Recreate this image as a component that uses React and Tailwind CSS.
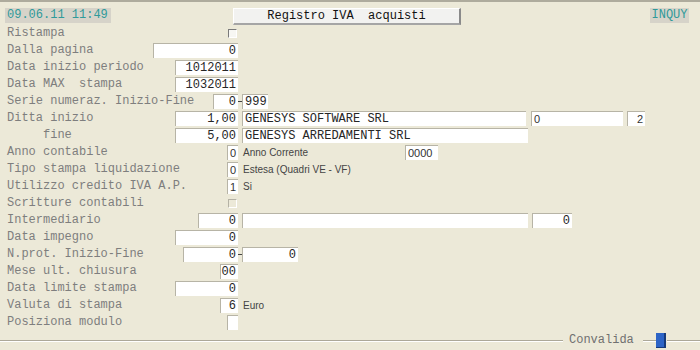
import React from "react";

const MONO = "font-['Liberation_Mono','Courier_New',monospace]";
const SANS = "font-['Liberation_Sans',Arial,sans-serif]";

function Box({ w, align = "right", sans = false, children, className = "" }) {
  return (
    <div
      className={`h-[15px] shrink-0 bg-white border-t border-l border-[#b7b4a6] flex items-center overflow-hidden whitespace-pre ${
        align === "right" ? "justify-end pr-[2px]" : "justify-start pl-[2px]"
      } ${sans ? `${SANS} text-[11px] text-[#333]` : `${MONO} text-[12px] text-[#262626]`} leading-[14px] ${w} ${className}`}
    >
      {children}
    </div>
  );
}

function Check({ disabled = false }) {
  return (
    <div
      className={`w-[9px] h-[9px] mr-[1px] shrink-0 border-t border-l ${
        disabled ? "border-[#b5b2a5] bg-[#ece9d8]" : "border-[#7a7a7a] bg-[#f7f7f3]"
      } border-r border-b border-r-white border-b-white`}
    />
  );
}

function Row({ label, right, children, indent = false }) {
  return (
    <div className="flex h-[17px] items-center">
      <div className="w-[238px] shrink-0 flex items-center justify-between pl-[7px]">
        <span className={`whitespace-pre text-[12px] leading-[17px] text-[#7e7e7e] ${MONO}`}>
          {indent ? "     " : ""}
          {label}
        </span>
        {right}
      </div>
      {children}
    </div>
  );
}

function Dash() {
  return (
    <div className="w-[4px] h-[15px] flex items-center shrink-0">
      <div className="w-[4px] h-px bg-[#444]" />
    </div>
  );
}

function Note({ children, className = "" }) {
  return (
    <span className={`${SANS} text-[10px] leading-[15px] text-[#444] whitespace-pre ${className}`}>
      {children}
    </span>
  );
}

export default function App() {
  return (
    <div className={`w-[700px] h-[350px] bg-[#ece9d8] overflow-hidden ${MONO}`}>
      <div className="border-t-2 border-[#aeab9d]" />
      {/* header */}
      <div className="h-[23px] flex items-start pt-[6px] pl-[5px]">
        <div className="w-[106px] h-[15px] bg-[#d6d3c9] text-[#2f9a9a] text-[12px] leading-[15px] pl-[2px]">
          09.06.11 11:49
        </div>
        <div className="ml-[122px] w-[228px] h-[17px] bg-[#f2f2f0] border-t border-l border-white border-r-2 border-b-2 border-r-[#8a8a8a] border-b-[#a5a5a5] text-[12px] leading-[14px] text-[#111] text-center whitespace-pre">
          Registro IVA  acquisti
        </div>
        <div className="ml-auto mr-[11px] w-[39px] h-[15px] bg-[#d6d3c9] text-[#2f9a9a] text-[12px] leading-[15px] text-center">
          INQUY
        </div>
      </div>

      <Row label="Ristampa" right={<Check />} />
      <Row label="Dalla pagina" right={<Box w="w-[85px]">0</Box>} />
      <Row label="Data inizio periodo" right={<Box w="w-[63px]">1012011</Box>} />
      <Row label="Data MAX  stampa" right={<Box w="w-[63px]">1032011</Box>} />
      <Row label="Serie numeraz. Inizio-Fine" right={<Box w="w-[25px]">0</Box>}>
        <Dash />
        <Box w="w-[26px]" align="left">999</Box>
      </Row>
      <Row label="Ditta inizio" right={<Box w="w-[63px]">1,00</Box>}>
        <Box w="w-[284px]" align="left" className="ml-[4px]">GENESYS SOFTWARE SRL</Box>
        <Box w="w-[92px]" align="left" sans className="ml-[5px]">0</Box>
        <Box w="w-[18px]" sans className="ml-[4px]">2</Box>
      </Row>
      <Row label="fine" indent right={<Box w="w-[63px]">5,00</Box>}>
        <Box w="w-[286px]" align="left" className="ml-[4px]">GENESYS ARREDAMENTI SRL</Box>
      </Row>
      <Row label="Anno contabile" right={<Box w="w-[11px]" sans align="left" className="pl-[1px]">0</Box>}>
        <div className="w-[167px] pl-[5px] flex items-center">
          <Note>Anno Corrente</Note>
        </div>
        <Box w="w-[33px]" sans align="left">0000</Box>
      </Row>
      <Row label="Tipo stampa liquidazione" right={<Box w="w-[11px]" sans align="left" className="pl-[1px]">0</Box>}>
        <Note className="ml-[5px]">Estesa (Quadri VE - VF)</Note>
      </Row>
      <Row label="Utilizzo credito IVA A.P." right={<Box w="w-[11px]" sans align="left" className="pl-[1px]">1</Box>}>
        <Note className="ml-[5px]">Si</Note>
      </Row>
      <Row label="Scritture contabili" right={<Check disabled />} />
      <Row label="Intermediario" right={<Box w="w-[40px]">0</Box>}>
        <Box w="w-[286px]" align="left" className="ml-[4px]"> </Box>
        <Box w="w-[40px]" className="ml-[4px]">0</Box>
      </Row>
      <Row label="Data impegno" right={<Box w="w-[63px]">0</Box>} />
      <Row label="N.prot. Inizio-Fine" right={<Box w="w-[55px]">0</Box>}>
        <Dash />
        <Box w="w-[56px]">0</Box>
      </Row>
      <Row label="Mese ult. chiusura" right={<Box w="w-[18px]">00</Box>} />
      <Row label="Data limite stampa" right={<Box w="w-[63px]">0</Box>} />
      <Row label="Valuta di stampa" right={<Box w="w-[18px]">6</Box>}>
        <Note className="ml-[5px]">Euro</Note>
      </Row>
      <Row label="Posiziona modulo" right={<Box w="w-[11px]"> </Box>} />

      {/* bottom bar */}
      <div className="h-[19px] flex items-center">
        <div className="w-[563px] h-[2px] border-t border-[#aca899] border-b border-b-white shrink-0" />
        <span className="ml-[6px] text-[12px] leading-[15px] text-[#707070]">Convalida</span>
        <div className="ml-[9px] w-[13px] h-[2px] border-t border-[#aca899] border-b border-b-white shrink-0" />
        <div className="w-[10px] h-[15px] bg-[#2d64c6] border-r-2 border-b border-[#163a7a] shrink-0" />
        <div className="ml-[1px] flex-1 h-[2px] border-t border-[#aca899] border-b border-b-white" />
      </div>
    </div>
  );
}
